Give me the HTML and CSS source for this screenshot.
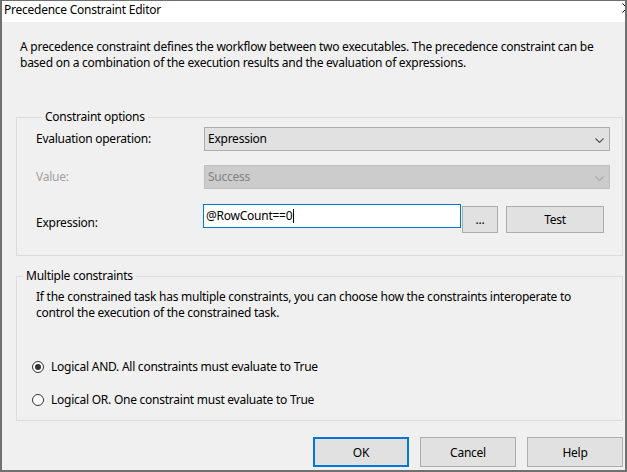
FILE: index.html
```html
<!DOCTYPE html>
<html>
  <head>
    <title>Precedence Constraint Editor</title>
    <link rel="stylesheet" href="styles.css">
  </head>
  <body>
    <div class="window">
      <div class="titlebar">
        <span class="title">Precedence Constraint Editor</span>
        <svg class="close" width="10" height="10" viewBox="0 0 10 10">
          <path d="M0.5 0.5 L9.5 9.5 M0.5 9.5 L9.5 0.5" stroke="#000" stroke-width="1" fill="none" />
        </svg>
      </div>

      <div class="content">
        <p class="intro">
          A precedence constraint defines the workflow between two executables. The precedence constraint can be<br />
          based on a combination of the execution results and the evaluation of expressions.
        </p>

        <fieldset class="group options">
          <legend>Constraint options</legend>

          <div class="field-row">
            <label>Evaluation operation:</label>
            <div class="combo">
              <span>Expression</span>
              <svg class="chevron" width="9" height="5" viewBox="0 0 9 5">
                <polyline points="0.5,0.5 4.5,4.5 8.5,0.5" fill="none" stroke="#5a5a5a" stroke-width="1.2" />
              </svg>
            </div>
          </div>

          <div class="field-row disabled">
            <label>Value:</label>
            <div class="combo">
              <span>Success</span>
              <svg class="chevron" width="9" height="5" viewBox="0 0 9 5">
                <polyline points="0.5,0.5 4.5,4.5 8.5,0.5" fill="none" stroke="#ababab" stroke-width="1.2" />
              </svg>
            </div>
          </div>

          <div class="field-row expr-row">
            <label>Expression:</label>
            <div class="textbox">@RowCount==0<span class="caret"></span></div>
            <button class="btn btn-browse">...</button>
            <button class="btn btn-test">Test</button>
          </div>
        </fieldset>

        <fieldset class="group multiple">
          <legend>Multiple constraints</legend>
          <p class="group-text">
            If the constrained task has multiple constraints, you can choose how the constraints interoperate to<br />
            control the execution of the constrained task.
          </p>
          <div class="radio-row first">
            <span class="radio checked"></span>
            Logical AND. All constraints must evaluate to True
          </div>
          <div class="radio-row">
            <span class="radio"></span>
            Logical OR. One constraint must evaluate to True
          </div>
        </fieldset>

        <div class="footer">
          <button class="btn btn-dialog btn-default">OK</button>
          <button class="btn btn-dialog">Cancel</button>
          <button class="btn btn-dialog">Help</button>
        </div>
      </div>
    </div>
  </body>
</html>
```

FILE: styles.css
```css
body {
  margin: 0;
  font-family: "Noto Sans", Arial, sans-serif;
  font-size: 12px;
  line-height: 16px;
  letter-spacing: -0.25px;
  color: #000;
  background: #fff;
}
.window {
  width: 627px;
  height: 472px;
  box-sizing: border-box;
  border: 2px solid #707070;
  border-top-width: 1px;
  overflow: hidden;
  display: flex;
  flex-direction: column;
}
.titlebar {
  height: 21px;
  background: #fff;
  display: flex;
  align-items: flex-start;
  overflow: hidden;
  padding-left: 2px;
  flex: none;
}
.title {
  line-height: 16px;
  padding-top: 1px;
  white-space: nowrap;
}
.close {
  margin-left: auto;
  margin-right: -7px;
  margin-top: 2px;
  flex: none;
}
.content {
  flex: 1;
  background: #f0f0f0;
  padding: 17px 0 0 14px;
}
.intro {
  margin: 0 0 0 4px;
  white-space: nowrap;
}
.group {
  border: 1px solid #dcdcdc;
  margin: 0 2px 0 0;
  padding: 0;
  min-width: 0;
}
.group legend {
  margin-left: 6px;
  padding: 0 3px;
  line-height: 16px;
}
.options {
  margin-top: 38px;
  padding: 2px 12px 22px 19px;
}
.field-row {
  display: flex;
  align-items: center;
  height: 24px;
}
.field-row + .field-row {
  margin-top: 14px;
}
.field-row label {
  width: 168px;
  flex: none;
}
.field-row.disabled label {
  color: #a0a0a0;
}
.combo {
  flex: 1;
  height: 24px;
  box-sizing: border-box;
  border: 1px solid #adadad;
  background: #e1e1e1;
  display: flex;
  align-items: center;
  padding: 0 5px 0 3px;
}
.combo span {
  flex: 1;
}
.chevron {
  margin-top: 2px;
}
.disabled .combo {
  background: #cccccc;
  border-color: #bfbfbf;
  color: #838383;
}
.expr-row {
  align-items: flex-start;
  height: 29px;
}
.field-row.expr-row {
  margin-top: 15px;
}
.expr-row label {
  margin-top: 11px;
}
.textbox {
  width: 258px;
  height: 24px;
  box-sizing: border-box;
  margin-left: -1px;
  border: 1px solid #0078d7;
  background: #fff;
  padding-left: 2px;
  display: flex;
  align-items: center;
  white-space: nowrap;
}
.caret {
  display: inline-block;
  width: 1px;
  height: 14px;
  background: #000;
  margin-left: 1px;
}
.btn {
  font-family: inherit;
  font-size: 12px;
  letter-spacing: -0.25px;
  color: #000;
  background: #e1e1e1;
  border: 1px solid #adadad;
  box-sizing: border-box;
  padding: 0;
}
.btn-browse {
  width: 36px;
  height: 27px;
  margin: 2px 0 0 1px;
  line-height: 10px;
}
.btn-test {
  width: 98px;
  height: 27px;
  margin: 2px 0 0 8px;
}
.multiple {
  margin-top: 12px;
  padding: 5px 0 12px 0;
}
.group-text {
  margin: 0 0 0 19px;
  white-space: nowrap;
}
.radio-row {
  display: flex;
  align-items: center;
  height: 16px;
  padding-left: 15px;
  margin-top: 17px;
}
.radio-row.first {
  margin-top: 38px;
}
.radio {
  width: 12px;
  height: 12px;
  box-sizing: border-box;
  border: 1px solid #333;
  border-radius: 50%;
  margin-right: 7px;
  background: #fff;
  display: flex;
  align-items: center;
  justify-content: center;
}
.radio.checked::after {
  content: "";
  width: 6px;
  height: 6px;
  border-radius: 50%;
  background: #333;
}
.footer {
  display: flex;
  justify-content: flex-end;
  gap: 11px;
  margin: 16px 2px 0 0;
}
.btn-dialog {
  width: 96px;
  height: 30px;
}
.btn-default {
  border: 2px solid #0078d7;
}
```
